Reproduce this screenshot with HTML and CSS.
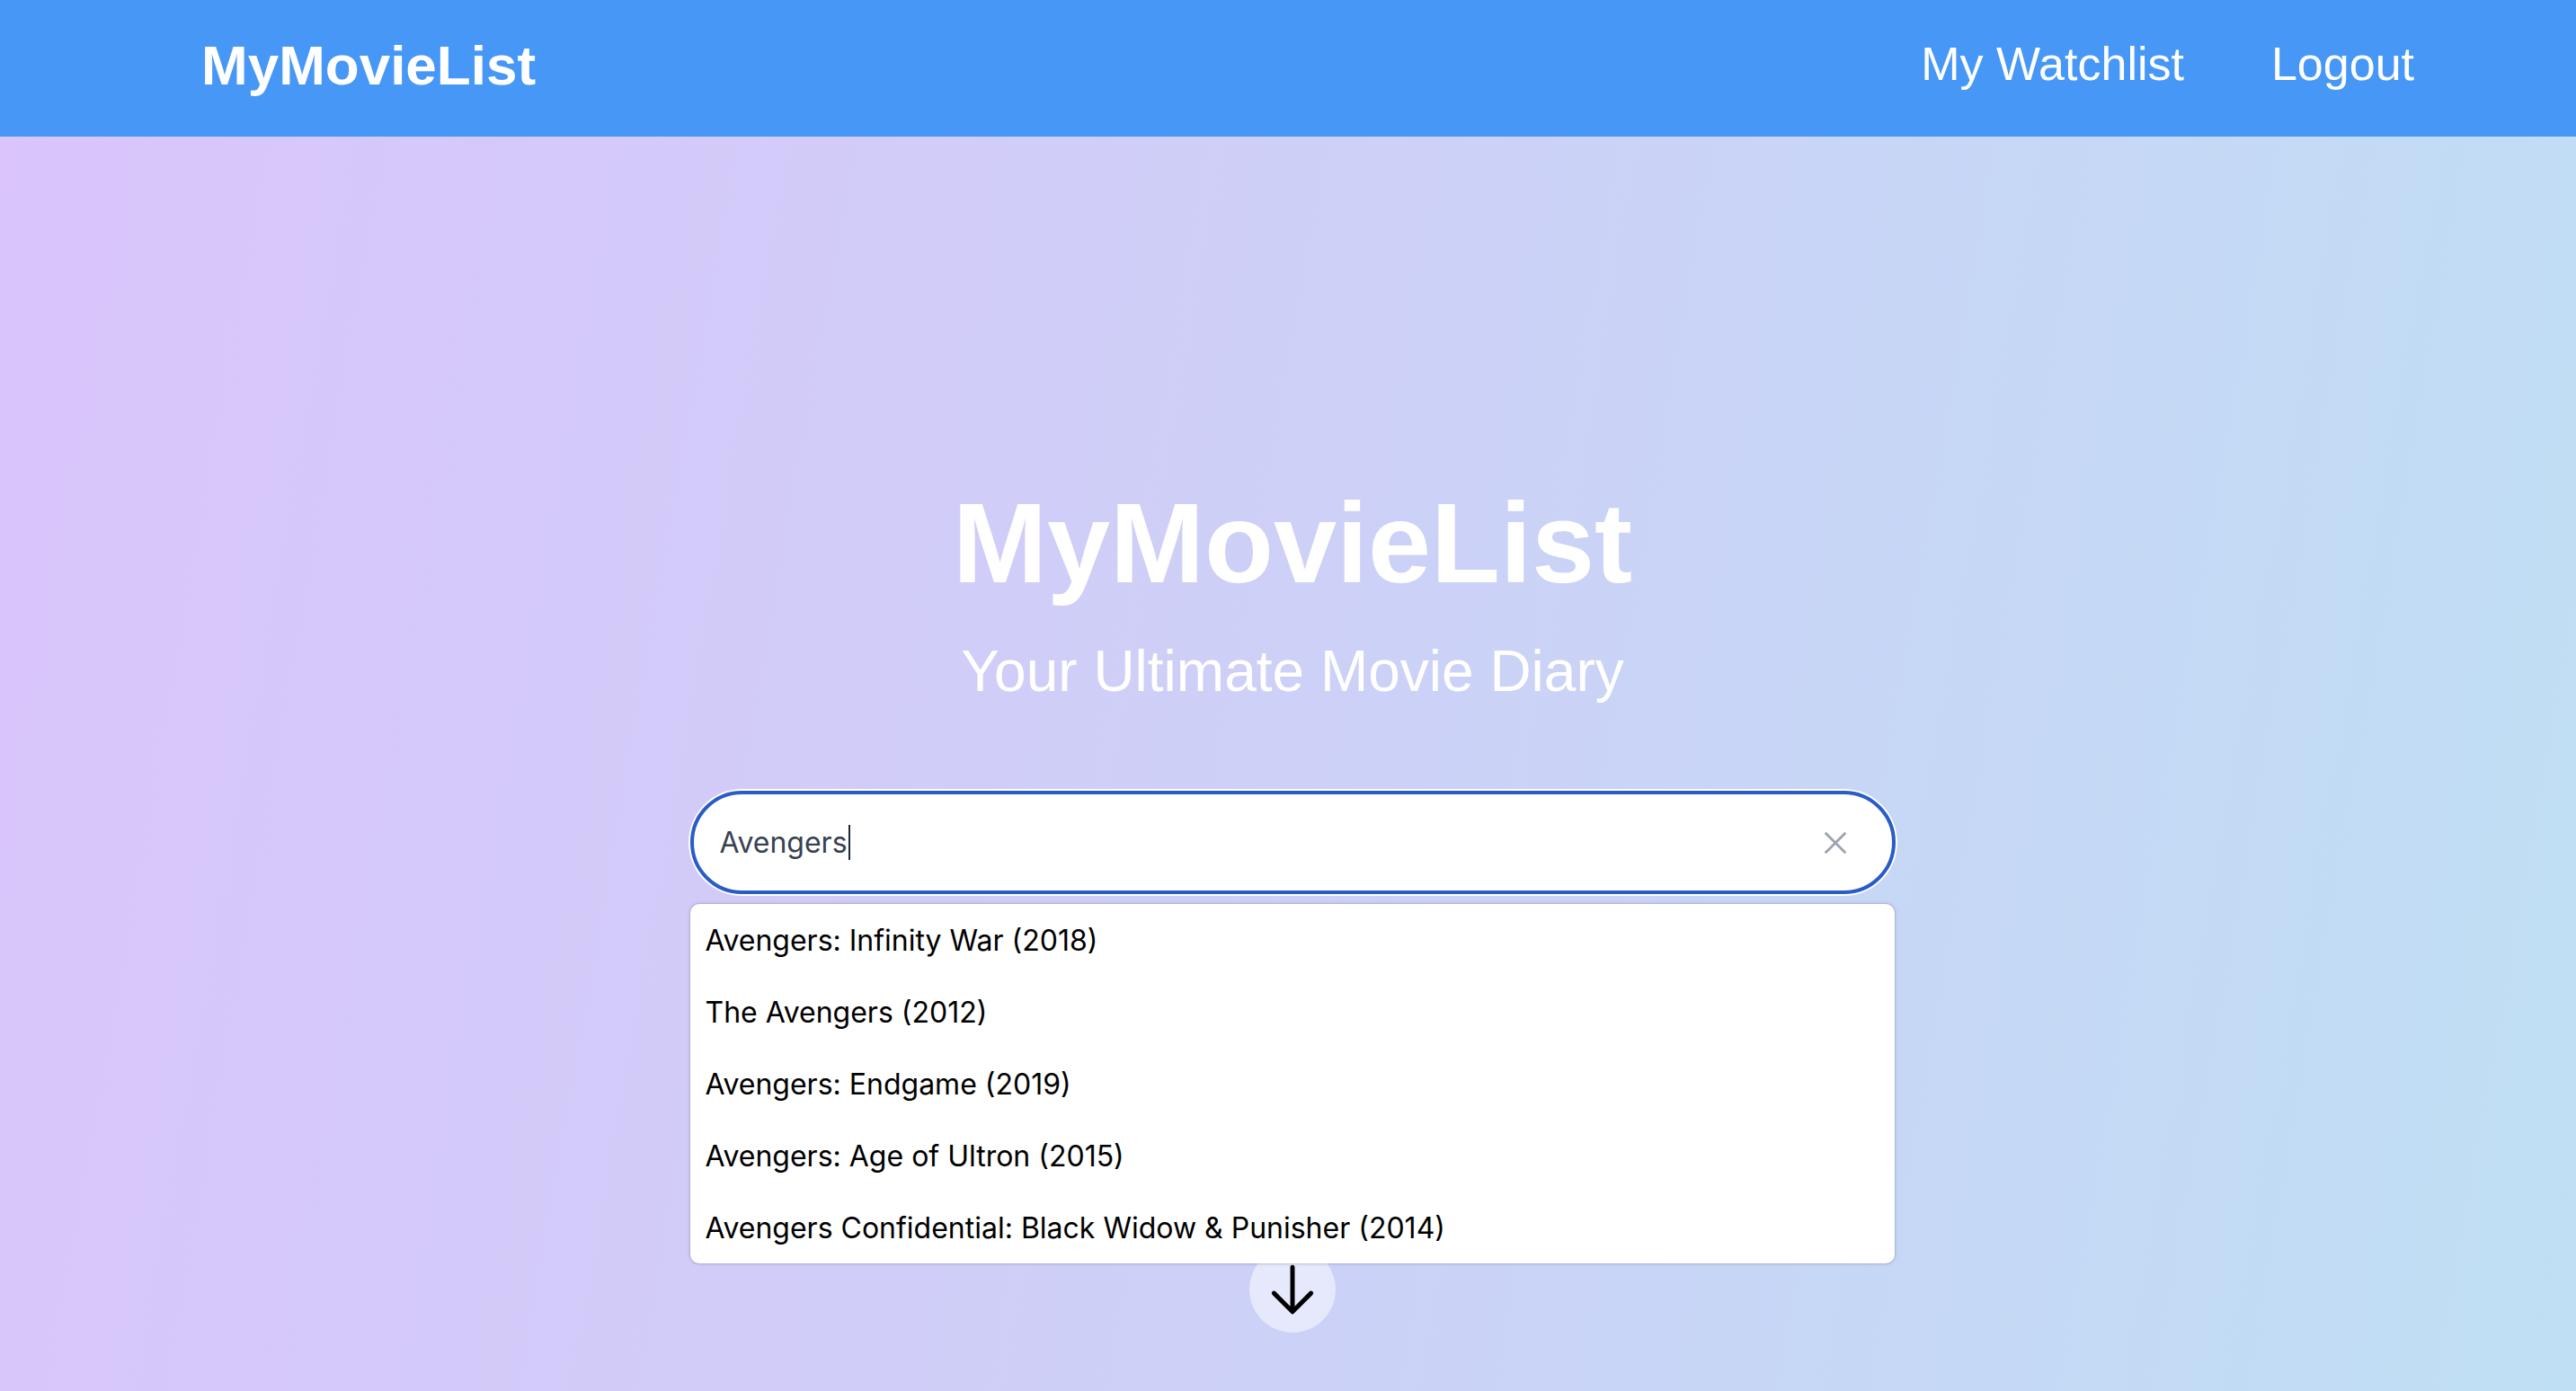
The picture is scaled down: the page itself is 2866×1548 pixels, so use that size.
FILE: index.html
```html
<!DOCTYPE html>
<html lang="en">
<head>
<meta charset="utf-8">
<title>MyMovieList</title>
<link rel="stylesheet" href="styles.css">
</head>
<body>
<header class="topbar">
  <a class="brand" href="#">MyMovieList</a>
  <nav class="nav">
    <a class="nav-link" href="#">My Watchlist</a>
    <a class="nav-link" href="#">Logout</a>
  </nav>
</header>
<main class="hero">
  <h1 class="hero-title">MyMovieList</h1>
  <p class="hero-subtitle">Your Ultimate Movie Diary</p>
  <div class="search">
    <div class="search-field">
      <span class="search-query">Avengers</span><span class="caret"></span>
      <button class="clear-btn" aria-label="Clear">
        <svg viewBox="0 0 24 24" width="34" height="34" fill="none" stroke="currentColor" stroke-width="2" stroke-linecap="butt"><path d="M4 4 20 20M20 4 4 20"/></svg>
      </button>
    </div>
    <ul class="suggestions">
      <li class="suggestion">Avengers: Infinity War (2018)</li>
      <li class="suggestion">The Avengers (2012)</li>
      <li class="suggestion">Avengers: Endgame (2019)</li>
      <li class="suggestion">Avengers: Age of Ultron (2015)</li>
      <li class="suggestion">Avengers Confidential: Black Widow &amp; Punisher (2014)</li>
    </ul>
  </div>
  <div class="scroll-down">
    <svg viewBox="0 0 24 24" width="66" height="66" fill="none" stroke="currentColor" stroke-width="1.8" stroke-linecap="round" stroke-linejoin="round"><path d="M19.5 13.5 12 21m0 0-7.5-7.5M12 21V3"/></svg>
  </div>
</main>
</body>
</html>
```

FILE: styles.css
```css
* { box-sizing: border-box; }

html, body {
  margin: 0;
  padding: 0;
}

body {
  min-height: 100vh;
  font-family: "Liberation Sans", Arial, sans-serif;
  background: linear-gradient(100deg, #dac4fb 0%, #cdd0f7 50%, #bfdff4 100%);
  overflow: hidden;
}

.topbar {
  height: 152px;
  background: #4797f7;
  display: flex;
  align-items: center;
  justify-content: space-between;
  padding: 0 180px 7px 224px;
}

.brand {
  font-family: "Liberation Sans", Arial, sans-serif;
  font-weight: 700;
  font-size: 62px;
  line-height: 1;
  color: #fff;
  text-decoration: none;
}

.nav {
  display: flex;
  align-items: center;
  gap: 97px;
  padding-bottom: 3px;
}

.nav-link {
  font-family: "Liberation Sans", Arial, sans-serif;
  font-size: 52px;
  line-height: 1;
  color: #fff;
  text-decoration: none;
}

.hero {
  display: flex;
  flex-direction: column;
  align-items: center;
  padding: 391px 0 0 10px;
}

.hero-title {
  margin: 0;
  font-family: "Liberation Sans", Arial, sans-serif;
  font-weight: 700;
  font-size: 126px;
  line-height: 124px;
  color: #fff;
}

.hero-subtitle {
  margin: 49px 0 0;
  font-family: "Liberation Sans", Arial, sans-serif;
  font-size: 64px;
  line-height: 62px;
  color: #fff;
}

.search {
  position: relative;
  width: 1341px;
  margin-top: 102px;
}

.search-field {
  height: 115px;
  border: 4px solid #2a5cc8;
  border-radius: 58px;
  background: #fff;
  box-shadow: 0 0 0 2px #fff;
  display: flex;
  align-items: center;
  padding: 0 46px 0 29px;
  font-family: Inter, "Noto Sans", sans-serif;
  font-size: 32px;
  color: #374151;
}

.search-query {
  line-height: 1;
}

.caret {
  display: inline-block;
  width: 2px;
  height: 39px;
  background: #1f2937;
  margin-left: 1px;
}

.clear-btn {
  margin-left: auto;
  border: 0;
  background: transparent;
  padding: 0;
  width: 34px;
  height: 34px;
  color: #9ca3af;
  display: flex;
  align-items: center;
  justify-content: center;
}

.suggestions {
  position: absolute;
  top: calc(100% + 11px);
  left: 0;
  right: 1px;
  margin: 0;
  padding: 0;
  list-style: none;
  background: #fff;
  border-radius: 10px;
  box-shadow: 0 0 0 1px rgba(0, 0, 0, 0.06), 0 0 4px rgba(0, 0, 0, 0.18);
  z-index: 2;
}

.suggestion {
  height: 80px;
  display: flex;
  align-items: center;
  padding-left: 17px;
  font-family: Inter, "Noto Sans", sans-serif;
  font-size: 32px;
  color: #000;
}

.scroll-down {
  margin-top: 392px;
  width: 96px;
  height: 96px;
  border-radius: 50%;
  background: rgba(255, 255, 255, 0.5);
  display: flex;
  align-items: center;
  justify-content: center;
  color: #000;
}

.scroll-down svg {
  display: block;
}
```
